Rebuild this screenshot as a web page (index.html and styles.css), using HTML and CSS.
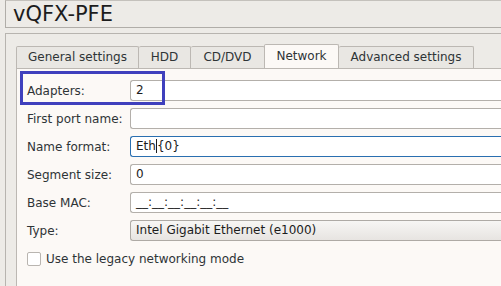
FILE: index.html
```html
<!DOCTYPE html>
<html lang="en">
  <head>
    <meta charset="UTF-8" />
    <meta name="viewport" content="width=device-width, initial-scale=1.0" />
    <title>vQFX-PFE</title>
    <link rel="stylesheet" href="styles.css">
  </head>
  <body>
    <!-- 노드 이름 -->
    <div class="title">vQFX-PFE</div>

    <!-- 설정 박스 -->
    <div class="group">
      <ul class="tabs">
        <li>General settings</li>
        <li>HDD</li>
        <li>CD/DVD</li>
        <li class="on">Network</li>
        <li>Advanced settings</li>
      </ul>

      <div class="pane">
        <!-- 강조 박스 -->
        <div class="mark"></div>

        <div class="row">
          <label>Adapters:</label>
          <div class="inp">2</div>
        </div>
        <div class="row">
          <label>First port name:</label>
          <div class="inp"></div>
        </div>
        <div class="row">
          <label>Name format:</label>
          <div class="inp focus">Eth<span class="caret"></span>{0}</div>
        </div>
        <div class="row">
          <label>Segment size:</label>
          <div class="inp">0</div>
        </div>
        <div class="row">
          <label>Base MAC:</label>
          <div class="inp">__:__:__:__:__:__</div>
        </div>
        <div class="row">
          <label>Type:</label>
          <div class="inp combo">Intel Gigabit Ethernet (e1000)</div>
        </div>

        <div class="chk">
          <span class="box"></span>
          Use the legacy networking mode
        </div>
      </div>
    </div>
  </body>
</html>
```

FILE: styles.css
```css
html,
body {
  margin: 0;
  padding: 0;
  overflow: hidden;
}
body {
  width: 501px;
  height: 286px;
  background-color: #edebe7;
  font-family: "DejaVu Sans", sans-serif;
  font-size: 12px;
  color: #2e3436;
}

/* 제목 박스 */
.title {
  height: 26px;
  margin-left: 5px;
  padding-left: 7px;
  border: 1px solid #b0ada8;
  border-right: none;
  border-top-color: #c4c1bc;
  font-size: 21px;
  line-height: 26px;
  color: #1c1c1c;
  white-space: nowrap;
}

/* 바깥 그룹 */
.group {
  margin: 5px 0 0 5px;
  padding: 12px 0 0 10px;
  height: 240px;
  border-top: 1px solid #b7b4af;
  border-left: 1px solid #b7b4af;
}

/* 탭 */
.tabs {
  display: flex;
  align-items: flex-end;
  margin: 0;
  padding: 0;
  list-style: none;
  height: 22px;
  white-space: nowrap;
}
.tabs li {
  box-sizing: border-box;
  height: 22px;
  line-height: 21px;
  text-align: center;
  background-color: #e9e7e3;
  border-top: 1px solid #bcb8b3;
  border-right: 1px solid #bcb8b3;
  border-radius: 2px 2px 0 0;
}
.tabs li:first-child {
  border-left: 1px solid #bcb8b3;
}
.tabs li.on {
  position: relative;
  height: 25px;
  margin: 0 0 -1px -1px;
  line-height: 22px;
  background-color: #fcf9f6;
  border-left: 1px solid #bcb8b3;
}
.tabs li:nth-child(1) { width: 123px; }
.tabs li:nth-child(2) { width: 52px; }
.tabs li:nth-child(3) { width: 74px; }
.tabs li:nth-child(4) { width: 75px; }
.tabs li:nth-child(5) { width: 135px; }

/* 탭 내용 */
.pane {
  position: relative;
  display: flex;
  flex-direction: column;
  gap: 7px;
  padding: 11px 0 0 10px;
  height: 206px;
  background-color: #fcf9f6;
  border-top: 1px solid #bcb8b3;
  border-left: 1px solid #bcb8b3;
}

/* 파란 강조 박스 */
.mark {
  position: absolute;
  left: 3px;
  top: 2px;
  width: 139px;
  height: 28px;
  border: 3px solid #3f40bd;
}

.row {
  display: flex;
  align-items: center;
  height: 21px;
}
.row label {
  flex: none;
  width: 103px;
  white-space: nowrap;
}
.inp {
  flex: 1;
  height: 19px;
  padding-left: 5px;
  line-height: 19px;
  background-color: #fff;
  border: 1px solid #b3afaa;
  border-right: none;
  border-radius: 3px 0 0 3px;
  color: #1c1c1c;
  white-space: nowrap;
}
.inp.focus {
  border-color: #2a6fb0;
}
.caret {
  display: inline-block;
  width: 1px;
  height: 14px;
  vertical-align: -3px;
  background-color: #1c1c1c;
}
.inp.combo {
  background-image: linear-gradient(to bottom, #f7f6f4, #e7e4e1);
  border-color: #aeaaa5;
}

/* 체크박스 */
.chk {
  display: flex;
  align-items: center;
  gap: 5px;
  margin-top: 4px;
  height: 14px;
}
.chk .box {
  width: 12px;
  height: 12px;
  background-color: #fff;
  border: 1px solid #b9b5b0;
  border-radius: 2px;
}
```
